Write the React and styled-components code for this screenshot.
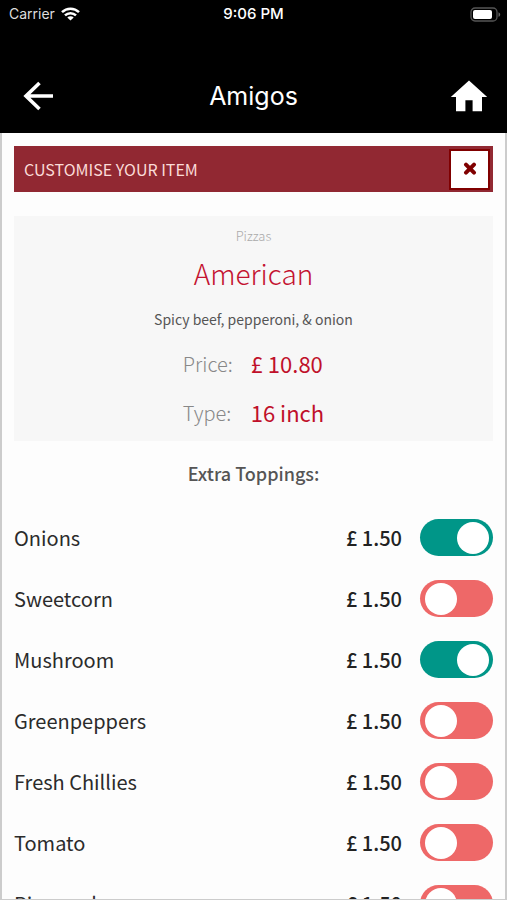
import React, {useState} from "react";
import styled, {createGlobalStyle} from "styled-components";

const GlobalStyle = createGlobalStyle`
  * {
    box-sizing: border-box;
  }
  body {
    margin: 0;
    background: #000;
    font-family: "Noto Sans CJK SC", "Open Sans", sans-serif;
  }
`;

const Screen = styled.div`
  height: 100vh;
  display: flex;
  flex-direction: column;
`;

const StatusBar = styled.div`
  display: grid;
  grid-template-columns: 1fr auto 1fr;
  align-items: center;
  height: 28px;
  padding: 0 6px;
  background: #000;
  color: white;
  font-family: Inter, sans-serif;
  font-size: 14px;
  line-height: 18px;
`;

const Carrier = styled.div`
  display: flex;
  align-items: center;
  gap: 6px;
  padding-left: 3px;
  color: #ddd;
`;

const Clock = styled.div`
  font-size: 15px;
  font-weight: 500;
`;

const Battery = styled.svg`
  justify-self: end;
`;

const Header = styled.header`
  display: flex;
  align-items: center;
  justify-content: space-between;
  height: 105px;
  flex-shrink: 0;
  padding: 30px 19px 0 21px;
  background: #000;
  color: white;
`;

const Title = styled.h1`
  margin: 0;
  font-family: Inter, sans-serif;
  font-size: 25px;
  font-weight: 400;
  line-height: 32px;
`;

const IconButton = styled.button`
  display: flex;
  padding: 0;
  border: none;
  background: transparent;
  color: white;
  cursor: pointer;
`;

const Content = styled.main`
  flex: 1;
  min-height: 0;
  overflow-y: auto;
  scrollbar-width: none;
  padding: 13px 12px 0;
  background: #fdfdfd;
  border: 2px solid #ccc;
  border-width: 0 2px 1px;
`;

const Banner = styled.div`
  display: flex;
  align-items: center;
  justify-content: space-between;
  height: 46px;
  padding: 0 3px 0 10px;
  background: #912832;
  color: #fbdcd8;
`;

const BannerTitle = styled.h2`
  margin: 0;
  font-size: 16px;
  font-weight: 400;
  line-height: 24px;
`;

const CloseButton = styled.button`
  display: flex;
  align-items: center;
  justify-content: center;
  width: 41px;
  height: 41px;
  padding: 0;
  border: 2px solid #800000;
  background: white;
  color: #800000;
  cursor: pointer;
`;

const ItemCard = styled.section`
  display: flex;
  flex-direction: column;
  align-items: center;
  margin-top: 24px;
  padding: 10px 0 4px;
  background: #f7f7f7;
`;

const Category = styled.div`
  color: #aaa;
  font-size: 13px;
  font-weight: 300;
  line-height: 20px;
`;

const ItemName = styled.h3`
  margin: 7px 0 8px;
  color: #c41230;
  font-size: 28px;
  font-weight: 300;
  line-height: 40px;
`;

const Description = styled.p`
  margin: 8px 0 10px;
  color: #555;
  font-size: 14px;
  line-height: 20px;
`;

const Details = styled.dl`
  display: grid;
  grid-template-columns: auto auto;
  align-items: center;
  column-gap: 18px;
  margin: 0;
  line-height: 49px;
`;

const Label = styled.dt`
  color: #888;
  font-size: 20px;
  font-weight: 300;
`;

const Value = styled.dd`
  margin: 0;
  color: #c0102a;
  font-size: 22px;
`;

const SectionTitle = styled.h4`
  margin: 20px 0 22px;
  color: #555;
  font-size: 18px;
  font-weight: 500;
  line-height: 24px;
  text-align: center;
`;

const ToppingList = styled.ul`
  margin: 0;
  padding: 0;
  list-style: none;
`;

const ToppingRow = styled.label`
  display: flex;
  align-items: center;
  height: 61px;
  color: #2b2b2b;
  font-size: 20px;
  cursor: pointer;
`;

const ToppingName = styled.span`
  flex: 1;
`;

const ToppingPrice = styled.span`
  margin-right: 18px;
  color: #222;
  font-weight: 500;
`;

const Switch = styled.input`
  appearance: none;
  width: 73px;
  height: 37px;
  margin: 0;
  padding: 3px 4px 3px 5px;
  display: flex;
  align-items: center;
  border-radius: 19px;
  background: #ee6868;
  cursor: pointer;
  &::before {
    content: "";
    width: 32px;
    height: 32px;
    border-radius: 50%;
    background: white;
  }
  &:checked {
    justify-content: flex-end;
    background: #009688;
  }
`;

const toppings = [
  {name: "Onions", price: "1.50", selected: true},
  {name: "Sweetcorn", price: "1.50", selected: false},
  {name: "Mushroom", price: "1.50", selected: true},
  {name: "Greenpeppers", price: "1.50", selected: false},
  {name: "Fresh Chillies", price: "1.50", selected: false},
  {name: "Tomato", price: "1.50", selected: false},
  {name: "Pineapple", price: "1.50", selected: false},
];

const WifiIcon = () => (
  <svg width="19" height="14" viewBox="0 0 19 14" fill="none" stroke="white" strokeWidth="2.5">
    <path d="M1 5.2a12.2 12.2 0 0 1 17 0" />
    <path d="M4 8.4a7.8 7.8 0 0 1 11 0" />
    <path d="M9.5 13.6 6.3 10.5a4.6 4.6 0 0 1 6.4 0Z" fill="white" stroke="none" />
  </svg>
);

const BatteryIcon = () => (
  <Battery width="31" height="15" viewBox="0 0 31 15">
    <rect x="1" y="1" width="26" height="13" rx="4" fill="none" stroke="#555" strokeWidth="1.3" />
    <rect x="3" y="3" width="19" height="9" rx="2" fill="white" />
    <path d="M28.5 5.2v4.6c1-.4 1.7-1.3 1.7-2.3s-.7-1.9-1.7-2.3Z" fill="#666" />
  </Battery>
);

const BackIcon = () => (
  <svg width="36" height="30" viewBox="0 0 36 30" fill="none" stroke="white" strokeWidth="3.6">
    <path d="M32 15H5M18.5 2 5 15l13.5 13" />
  </svg>
);

const HomeIcon = () => (
  <svg width="38" height="32" viewBox="0 0 38 32">
    <path d="M19 .5 37.2 17h-5.2V31.3h-9.4V20.2h-7.2v11.1H6V17H.8Z" fill="white" />
  </svg>
);

const CloseIcon = () => (
  <svg width="14" height="14" viewBox="0 0 14 14" stroke="currentColor" strokeWidth="4" strokeLinecap="round">
    <path d="M3 2.6l8 8M11 2.6l-8 8" />
  </svg>
);

const Topping = (props) => {
  const [selected, setSelected] = useState(props.selected);

  return (
    <li>
      <ToppingRow>
        <ToppingName>{props.name}</ToppingName>
        <ToppingPrice>£ {props.price}</ToppingPrice>
        <Switch type="checkbox" checked={selected} onChange={() => setSelected(!selected)} />
      </ToppingRow>
    </li>
  )
}

const App = () => {
  return (
    <>
      <GlobalStyle />
      <Screen>
        <StatusBar>
          <Carrier>Carrier <WifiIcon /></Carrier>
          <Clock>9:06 PM</Clock>
          <BatteryIcon />
        </StatusBar>
        <Header>
          <IconButton aria-label="Back"><BackIcon /></IconButton>
          <Title>Amigos</Title>
          <IconButton aria-label="Home"><HomeIcon /></IconButton>
        </Header>
        <Content>
          <Banner>
            <BannerTitle>CUSTOMISE YOUR ITEM</BannerTitle>
            <CloseButton aria-label="Close"><CloseIcon /></CloseButton>
          </Banner>
          <ItemCard>
            <Category>Pizzas</Category>
            <ItemName>American</ItemName>
            <Description>Spicy beef, pepperoni, &amp; onion</Description>
            <Details>
              <Label>Price:</Label>
              <Value>£ 10.80</Value>
              <Label>Type:</Label>
              <Value>16 inch</Value>
            </Details>
          </ItemCard>
          <SectionTitle>Extra Toppings:</SectionTitle>
          <ToppingList>
            {toppings.map((topping) => <Topping key={topping.name} {...topping} />)}
          </ToppingList>
        </Content>
      </Screen>
    </>
  );
}

export default App;
